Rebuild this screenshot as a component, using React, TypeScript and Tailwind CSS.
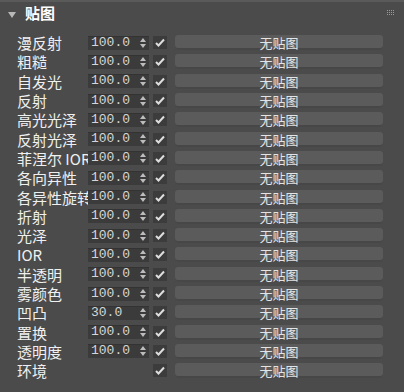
import React from 'react'

const rows: { label: string; value: string | null }[] = [
  { label: '漫反射', value: '100.0' },
  { label: '粗糙', value: '100.0' },
  { label: '自发光', value: '100.0' },
  { label: '反射', value: '100.0' },
  { label: '高光光泽', value: '100.0' },
  { label: '反射光泽', value: '100.0' },
  { label: '菲涅尔 IOR', value: '100.0' },
  { label: '各向异性', value: '100.0' },
  { label: '各异性旋转', value: '100.0' },
  { label: '折射', value: '100.0' },
  { label: '光泽', value: '100.0' },
  { label: 'IOR', value: '100.0' },
  { label: '半透明', value: '100.0' },
  { label: '雾颜色', value: '100.0' },
  { label: '凹凸', value: '30.0' },
  { label: '置换', value: '100.0' },
  { label: '透明度', value: '100.0' },
  { label: '环境', value: null },
]

const Spinner = ({ value }: { value: string }) => (
  <div className="flex h-[14px] w-[61px] items-center bg-[#3b3b3b] shadow-[inset_0_1px_0_#333]">
    <span className="flex-1 pl-[3px] font-['Liberation_Mono',monospace] text-[13px] leading-[14px] text-[#d6d6d6]">
      {value}
    </span>
    {/* up / down arrows */}
    <svg width="8" height="12" viewBox="0 0 8 12" className="mr-[2px]">
      <path d="M4 1 L7 5 L1 5 Z" fill="#bdbdbd" />
      <path d="M4 11 L7 7 L1 7 Z" fill="#bdbdbd" />
    </svg>
  </div>
)

const Check = () => (
  <div className="flex h-[13px] w-[14px] items-center justify-center bg-[#3c3c3c]">
    <svg width="10" height="9" viewBox="0 0 10 9">
      <path d="M1 5 L3.5 7.5 L9 1.5" stroke="#dedede" strokeWidth="2" fill="none" />
    </svg>
  </div>
)

export default function App() {
  return (
    <div className="relative h-[392px] w-[404px] overflow-hidden border-t-2 border-[#5a5a5a] bg-[#4b4b4b] font-['Noto_Sans_CJK_SC',sans-serif]">
      {/* title bar */}
      <div className="flex h-[31px] items-start pl-[8px] pt-[2px]">
        <svg width="8" height="6" viewBox="0 0 8 6" className="mt-[8px]">
          <path d="M0 0 L8 0 L4 6 Z" fill="#b8b8b8" />
        </svg>
        <span className="ml-[9px] text-[15px] font-bold leading-[18px] text-white">贴图</span>
        <div className="ml-auto mr-[10px] mt-[6px] grid grid-cols-4 gap-[1px]">
          {Array.from({ length: 12 }).map((_, i) => (
            <div key={i} className="h-[1px] w-[1px] bg-[#9a9a9a]" />
          ))}
        </div>
      </div>

      {/* map rows */}
      <div className="flex flex-col">
        {rows.map((r) => (
          <div key={r.label} className="flex h-[19.3px] items-center pl-[17px]">
            <div className="h-[19px] w-[71px] overflow-hidden whitespace-nowrap text-[15px] leading-[19px] text-[#f0f0f0]">
              {r.label}
            </div>
            <div className="w-[65px]">{r.value && <Spinner value={r.value} />}</div>
            <Check />
            <div className="ml-[8px] flex h-[15px] w-[208px] items-center justify-center rounded-[3px] bg-[#5b5b5b] shadow-[inset_0_-2px_0_#474747]">
              <span className="text-[13px] leading-[15px] text-[#e4e4e4]">无贴图</span>
            </div>
          </div>
        ))}
      </div>
    </div>
  )
}
